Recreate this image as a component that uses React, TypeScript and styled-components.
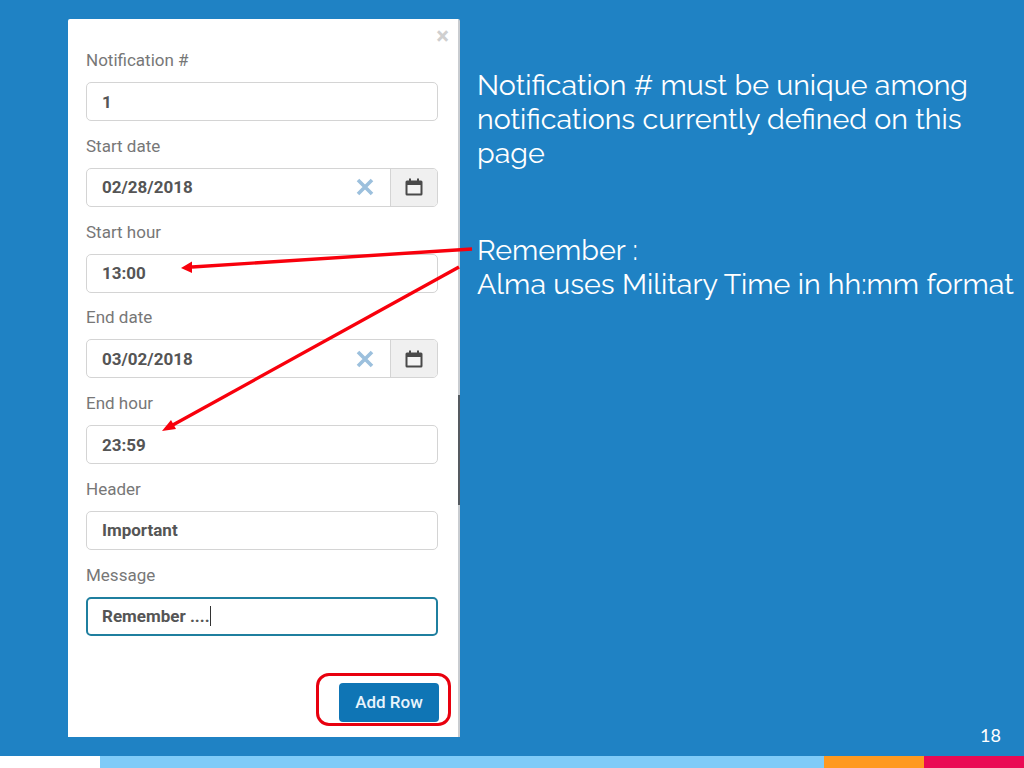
import styled, { createGlobalStyle } from 'styled-components';

const GlobalStyle = createGlobalStyle`
  html, body {
    margin: 0;
    padding: 0;
  }
  * {
    box-sizing: border-box;
  }
`;

const Slide = styled.div`
  position: relative;
  width: 1024px;
  height: 768px;
  overflow: hidden;
  display: flex;
  flex-direction: column;
  background: #1f82c4;
`;

const Main = styled.div`
  flex: 1;
  display: flex;
  padding: 19px 0 0 68px;
`;

const Panel = styled.div`
  position: relative;
  width: 392px;
  height: 718px;
  padding: 32px 19px 0 18px;
  background: #fff;
  border-right: 2px solid #c9ccd0;
  border-radius: 2px 2px 0 0;
  font-family: Roboto, "Liberation Sans", sans-serif;
`;

const CloseMark = styled.span`
  position: absolute;
  top: 8px;
  right: 9px;
  font-size: 24px;
  line-height: 18px;
  font-weight: 700;
  color: #cfcfcf;
`;

const ScrollThumb = styled.div`
  position: absolute;
  top: 376px;
  right: -2px;
  width: 2px;
  height: 110px;
  background: #555a60;
`;

const Field = styled.div`
  height: 85.8px;
`;

const Label = styled.div`
  height: 31px;
  font-size: 17px;
  line-height: 19px;
  color: #777;
`;

const InputBox = styled.div<{ $focused?: boolean }>`
  display: flex;
  align-items: stretch;
  width: 352px;
  height: 39px;
  border: ${(p) => (p.$focused ? '2px solid #1f7f9f' : '1px solid #d4d4d4')};
  border-radius: 5px;
  overflow: hidden;
  background: #fff;
`;

const Value = styled.div<{ $focused?: boolean }>`
  flex: 1;
  display: flex;
  align-items: center;
  padding-left: ${(p) => (p.$focused ? '14px' : '15px')};
  font-size: 17px;
  font-weight: 700;
  color: #555;
`;

const Caret = styled.span`
  display: inline-block;
  width: 1px;
  height: 20px;
  background: #333;
`;

const ClearButton = styled.div`
  display: flex;
  align-items: center;
  padding-right: 16px;
`;

const CalendarAddon = styled.div`
  display: flex;
  align-items: center;
  justify-content: center;
  width: 47px;
  background: #f0f0f0;
  border-left: 1px solid #d4d4d4;
`;

const Footer = styled.div`
  display: flex;
  justify-content: flex-end;
  margin-top: 47px;
`;

const AddRowWrap = styled.div`
  position: relative;
`;

const AddRowButton = styled.button`
  width: 100px;
  height: 39px;
  padding: 0;
  border: 0;
  border-radius: 4px;
  background: #0f75b5;
  color: #e8f4fc;
  font-family: Roboto, "Liberation Sans", sans-serif;
  font-size: 17px;
  font-weight: 500;
`;

const RedOutline = styled.div`
  position: absolute;
  top: -10px;
  left: -23px;
  right: -12px;
  bottom: -4px;
  border: 3px solid #e8000e;
  border-radius: 13px;
`;

const Notes = styled.div`
  flex: 1;
  display: flex;
  flex-direction: column;
  padding: 49px 0 0 17px;
  font-family: Raleway, Lato, "Open Sans", sans-serif;
  font-size: 28.6px;
  line-height: 34px;
  font-weight: 400;
  color: #fff;
`;

const Note = styled.p`
  margin: 0 0 63px;
  white-space: nowrap;
`;

const PageNumber = styled.div`
  position: absolute;
  right: 23px;
  bottom: 23px;
  font-family: Lato, sans-serif;
  font-size: 18px;
  line-height: 20px;
  color: #fff;
`;

const ColorBar = styled.div`
  display: grid;
  grid-template-columns: 100px 724px 100px 100px;
  height: 12px;
  margin-top: 19px;
`;

const BarSegment = styled.div<{ $color: string }>`
  background: ${(p) => p.$color};
`;

const Arrows = styled.svg`
  position: absolute;
  top: 0;
  left: 0;
  pointer-events: none;
`;

const ClearIcon = () => (
  <svg width="18" height="18" viewBox="0 0 18 18">
    <path d="M2 2 L16 16 M16 2 L2 16" stroke="#9cc0dd" strokeWidth="3.6" fill="none" />
  </svg>
);

const CalendarIcon = () => (
  <svg width="18" height="18" viewBox="0 0 18 18">
    <rect x="0.5" y="2.5" width="17" height="15" rx="1.5" fill="#4a4a4a" />
    <rect x="2.5" y="7" width="13" height="8.5" fill="#f4f4f4" />
    <rect x="4" y="0.5" width="2" height="3" fill="#4a4a4a" />
    <rect x="12" y="0.5" width="2" height="3" fill="#4a4a4a" />
  </svg>
);

const fields = [
  { label: 'Notification #', value: '1' },
  { label: 'Start date', value: '02/28/2018', date: true },
  { label: 'Start hour', value: '13:00' },
  { label: 'End date', value: '03/02/2018', date: true },
  { label: 'End hour', value: '23:59' },
  { label: 'Header', value: 'Important' },
];

const App = () => {
  return (
    <Slide>
      <GlobalStyle />
      <Main>
        <Panel>
          <CloseMark>×</CloseMark>
          {fields.map((f) => (
            <Field key={f.label}>
              <Label>{f.label}</Label>
              <InputBox>
                <Value>{f.value}</Value>
                {f.date && (
                  <>
                    <ClearButton>
                      <ClearIcon />
                    </ClearButton>
                    <CalendarAddon>
                      <CalendarIcon />
                    </CalendarAddon>
                  </>
                )}
              </InputBox>
            </Field>
          ))}
          <Field>
            <Label>Message</Label>
            <InputBox $focused>
              <Value $focused>
                Remember ....
                <Caret />
              </Value>
            </InputBox>
            <Footer>
              <AddRowWrap>
                <AddRowButton>Add Row</AddRowButton>
                <RedOutline />
              </AddRowWrap>
            </Footer>
          </Field>
          <ScrollThumb />
        </Panel>
        <Notes>
          <Note>
            Notification # must be unique among
            <br />
            notifications currently defined on this
            <br />
            page
          </Note>
          <Note>
            Remember :
            <br />
            Alma uses Military Time in hh:mm format
          </Note>
        </Notes>
      </Main>
      <ColorBar>
        <BarSegment $color="#ffffff" />
        <BarSegment $color="#7fcbf8" />
        <BarSegment $color="#ff991f" />
        <BarSegment $color="#ea0a54" />
      </ColorBar>
      <PageNumber>18</PageNumber>
      <Arrows width="1024" height="768">
        <path d="M472 249 L192 267" stroke="#f8000c" strokeWidth="3.4" fill="none" />
        <path d="M181 268 L192 261.5 L192 273 Z" fill="#f8000c" />
        <path d="M459 267 L171 426" stroke="#f8000c" strokeWidth="3.4" fill="none" />
        <path d="M162 431 L171 420 L176 429 Z" fill="#f8000c" />
      </Arrows>
    </Slide>
  );
};

export default App;
